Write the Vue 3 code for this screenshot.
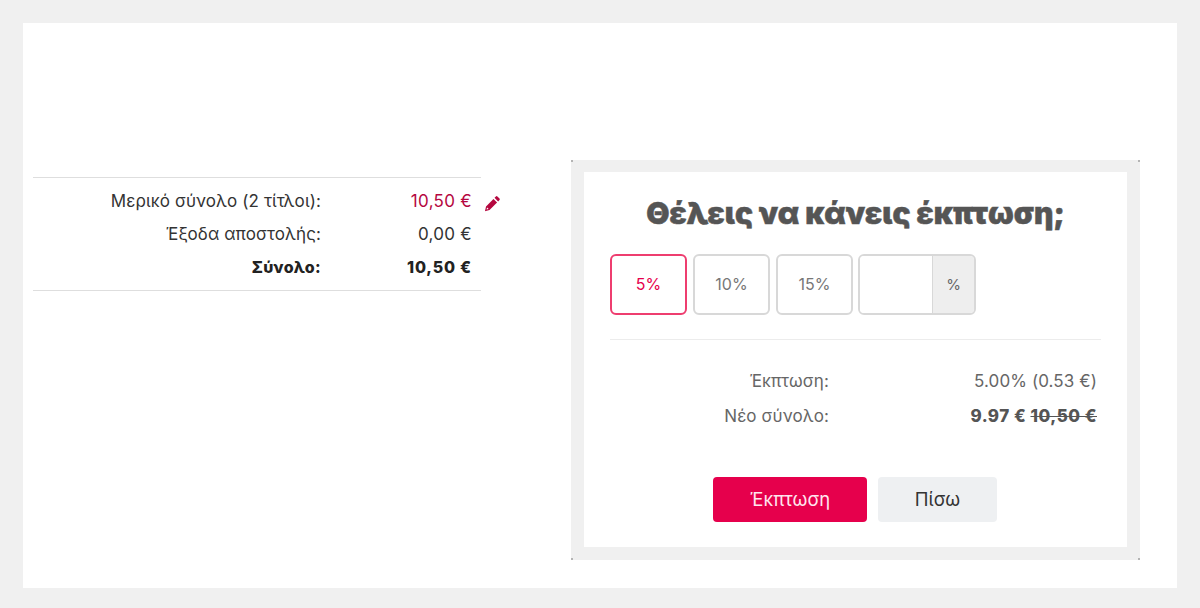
<script setup>
const presets = [
  { label: '5%', active: true },
  { label: '10%', active: false },
  { label: '15%', active: false }
]
</script>

<template>
  <div class="page">
    <main class="panel">
      <section class="summary">
        <div class="row">
          <span class="label">Μερικό σύνολο (2 τίτλοι):</span>
          <span class="value red">10,50 €</span>
          <svg class="pencil" viewBox="0 0 16 16" width="17" height="17" aria-hidden="true">
            <path fill="#b5073f" d="M11.2 1.4a1 1 0 0 1 1.4 0l2 2a1 1 0 0 1 0 1.4l-1.3 1.3-3.4-3.4zM8.9 3.7l3.4 3.4-7.1 7.1-4.3 1.1 1-4.4zM2.9 11.7l-.5 2 2-.5z" />
          </svg>
        </div>
        <div class="row">
          <span class="label">Έξοδα αποστολής:</span>
          <span class="value">0,00 €</span>
        </div>
        <div class="row total">
          <span class="label">Σύνολο:</span>
          <span class="value">10,50 €</span>
        </div>
      </section>

      <section class="dialog">
        <i class="corner tl"></i><i class="corner tr"></i><i class="corner bl"></i><i class="corner br"></i>
        <div class="dialog-inner">
          <h2 class="title">Θέλεις να κάνεις έκπτωση;</h2>
          <div class="choices">
            <button v-for="p in presets" :key="p.label" class="choice" :class="{ active: p.active }">{{ p.label }}</button>
            <div class="custom">
              <span class="custom-input"></span>
              <span class="custom-unit">%</span>
            </div>
          </div>
          <div class="details">
            <div class="detail">
              <span class="detail-label">Έκπτωση:</span>
              <span class="detail-value">5.00% (0.53 €)</span>
            </div>
            <div class="detail">
              <span class="detail-label">Νέο σύνολο:</span>
              <span class="detail-value strong">9.97 € <s>10,50 €</s></span>
            </div>
          </div>
          <div class="actions">
            <button class="btn primary">Έκπτωση</button>
            <button class="btn secondary">Πίσω</button>
          </div>
        </div>
      </section>
    </main>
  </div>
</template>

<style>
html, body { margin: 0; background: #f0f0f0; }
</style>

<style scoped>
.page {
  box-sizing: border-box;
  width: 1200px;
  height: 608px;
  padding: 23px;
  background: #f0f0f0;
  font-family: Inter, "Noto Sans", sans-serif;
}
.panel {
  box-sizing: border-box;
  height: 565px;
  background: #fff;
  display: flex;
  align-items: flex-start;
  padding: 137px 37px 0 10px;
  justify-content: space-between;
}
.summary {
  box-sizing: border-box;
  margin-top: 17px;
  width: 448px;
  height: 114px;
  border-top: 1px solid #dedede;
  border-bottom: 1px solid #dedede;
  padding-top: 6px;
  display: flex;
  flex-direction: column;
}
.row {
  display: flex;
  align-items: center;
  height: 33px;
  font-size: 17px;
  color: #333;
  position: relative;
}
.label { width: 288px; text-align: right; letter-spacing: 0.1px; }
.value { width: 151px; text-align: right; letter-spacing: 0.3px; }
.red { color: #b5073f; }
.total { font-weight: 800; color: #222; font-size: 16px; }
.total .label { letter-spacing: 0.3px; }
.total .value { letter-spacing: 0.8px; }
.pencil { position: absolute; left: 451px; top: 11px; }
.dialog {
  box-sizing: border-box;
  position: relative;
  width: 569px;
  height: 400px;
  border: 13px solid #f0f0f0;
  border-top-width: 12px;
  background: #fff;
}
.corner {
  position: absolute;
  width: 2px;
  height: 2px;
  background: #b4b4b4;
}
.tl { left: -13px; top: -12px; }
.tr { right: -13px; top: -12px; }
.bl { left: -13px; bottom: -13px; }
.br { right: -13px; bottom: -13px; }
.dialog-inner {
  box-sizing: border-box;
  height: 100%;
  padding: 0 26px;
  display: flex;
  flex-direction: column;
}
.title {
  margin: 23px 0 0;
  height: 59px;
  text-align: center;
  font-size: 30px;
  line-height: 36px;
  font-weight: 900;
  color: #555;
  -webkit-text-stroke: 0.5px #555;
}
.choices {
  display: flex;
  gap: 6px;
  padding-bottom: 24px;
  border-bottom: 1px solid #ececec;
}
.choice {
  box-sizing: border-box;
  width: 77px;
  height: 61px;
  border: 2px solid #d8d8d8;
  border-radius: 6px;
  background: #fff;
  color: #777;
  font: 16px Inter, "Noto Sans", sans-serif;
  padding: 0 0 1px;
}
.choice.active { border-color: #ee3d6f; color: #e6004c; }
.custom {
  box-sizing: border-box;
  display: flex;
  width: 118px;
  height: 61px;
  margin-left: -1px;
  border: 2px solid #d8d8d8;
  border-radius: 6px;
  overflow: hidden;
}
.custom-input { flex: 1; background: #fff; border-right: 1px solid #d8d8d8; }
.custom-unit {
  width: 41px;
  background: #eeeeee;
  color: #666;
  font-size: 15px;
  display: flex;
  align-items: center;
  justify-content: center;
}
.details { padding-top: 23px; display: flex; flex-direction: column; }
.detail {
  display: flex;
  height: 35px;
  align-items: center;
  font-size: 17px;
  color: #666;
  letter-spacing: 0.1px;
}
.detail-label { width: 219px; text-align: right; }
.detail-value { width: 268px; text-align: right; }
.strong { font-weight: 800; color: #555; letter-spacing: 0.5px; }
.actions {
  display: flex;
  justify-content: center;
  gap: 11px;
  margin: 44px 1px 0 0;
}
.btn {
  height: 45px;
  border: 0;
  border-radius: 4px;
  font: 18.5px Inter, "Noto Sans", sans-serif;
  padding: 0 0 1px;
}
.primary { width: 154px; background: #e6004c; color: #ffe6ee; }
.secondary { width: 119px; background: #eef0f2; color: #333; }
</style>
